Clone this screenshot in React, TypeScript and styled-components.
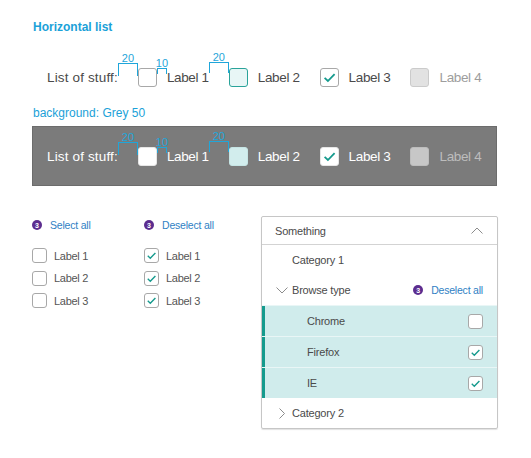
import React from 'react';
import styled, { createGlobalStyle } from 'styled-components';

const teal = '#159a8d';
const annot = '#1fa6da';
const link = '#2f7fc4';

const GlobalStyle = createGlobalStyle`
  html, body {
    margin: 0;
    background: #fff;
  }
  body {
    font-family: 'Liberation Sans', Arial, Helvetica, sans-serif;
    color: #4a4a4a;
  }
`;

const Page = styled.div`
  width: 531px;
  height: 458px;
  padding: 20px 34px 0 32px;
  box-sizing: border-box;
  overflow: hidden;
`;

const Heading = styled.h2`
  margin: 0 0 0 1px;
  font-size: 12px;
  line-height: 14px;
  font-weight: 700;
  color: #1ba1d8;
`;

const Caption = styled.div`
  margin: 18.5px 0 6.5px 1px;
  font-size: 12px;
  line-height: 14px;
  color: #1ba1d8;
`;

const DarkBar = styled.div`
  height: 60px;
  box-sizing: border-box;
  background: #7b7b7b;
  border: 1px solid #6c6c6c;
  display: flex;
  align-items: center;
  padding-left: 14px;
`;

const InlineList = styled.div<{ $dark?: boolean }>`
  display: flex;
  align-items: center;
  height: 19px;
  margin-top: ${p => (p.$dark ? 0 : 34)}px;
  padding-left: ${p => (p.$dark ? 0 : 15)}px;
  font-size: 13.5px;
  white-space: nowrap;
  color: ${p => (p.$dark ? '#fff' : '#4a4a4a')};
`;

const Lead = styled.span`
  letter-spacing: 0.15px;
`;

const ItemLabel = styled.span<{ $muted?: boolean; $dark?: boolean }>`
  letter-spacing: -0.35px;
  color: ${p => (p.$muted ? (p.$dark ? '#bdbdbd' : '#9d9d9d') : 'inherit')};
`;

const Gap = styled.span<{ $w: number }>`
  position: relative;
  flex: none;
  align-self: flex-start;
  width: ${p => p.$w}px;
  height: 19px;
`;

const Bracket = styled.span<{ $top: number; $h: number }>`
  position: absolute;
  left: 0;
  right: 0;
  top: ${p => p.$top}px;
  height: ${p => p.$h}px;
  box-sizing: border-box;
  border: 1px solid ${annot};
  border-bottom: 0;
`;

const Measure = styled.span`
  position: absolute;
  left: 50%;
  bottom: 100%;
  transform: translateX(-50%);
  font-size: 11px;
  line-height: 11px;
  letter-spacing: 0;
  color: ${annot};
`;

type BoxState = 'off' | 'active' | 'on' | 'disabled';

const boxColors = {
  light: {
    off: ['#fff', '#a8a8a8'],
    active: ['#e8f6f6', '#2aa39a'],
    on: ['#fff', '#a8a8a8'],
    disabled: ['#e2e2e2', '#cbcbcb'],
  },
  dark: {
    off: ['#fff', '#e6e6e6'],
    active: ['#d2eded', '#c6e5e5'],
    on: ['#fff', '#e6e6e6'],
    disabled: ['#c7c7c7', '#bdbdbd'],
  },
};

const Box = styled.span<{ $size: number; $state: BoxState; $dark?: boolean }>`
  flex: none;
  box-sizing: border-box;
  width: ${p => p.$size}px;
  height: ${p => p.$size}px;
  border-radius: 3px;
  display: inline-flex;
  align-items: center;
  justify-content: center;
  background: ${p => boxColors[p.$dark ? 'dark' : 'light'][p.$state][0]};
  border: 1px solid ${p => boxColors[p.$dark ? 'dark' : 'light'][p.$state][1]};
`;

const Check: React.FC<{ size: number }> = ({ size }) => (
  <svg width={size} height={size} viewBox="0 0 16 16">
    <polyline points="3.4,8.4 6.5,11.3 12.8,4.8" fill="none" stroke={teal} strokeWidth="1.7" />
  </svg>
);

const Checkbox: React.FC<{ size: number; state: BoxState; dark?: boolean }> = ({ size, state, dark }) => (
  <Box $size={size} $state={state} $dark={dark}>
    {state === 'on' && <Check size={size - 2} />}
  </Box>
);

const marks = [
  { w: 20, top: -5, h: 13, text: '20' },
  { w: 10, top: 0, h: 6, text: '10' },
  { w: 20, top: -6, h: 11, text: '20' },
];

const Spacer: React.FC<{ index: number; w: number }> = ({ index, w }) => {
  const m = marks[index];
  return (
    <Gap $w={w}>
      {m && (
        <Bracket $top={m.top} $h={m.h}>
          <Measure>{m.text}</Measure>
        </Bracket>
      )}
    </Gap>
  );
};

const rowStates: BoxState[] = ['off', 'active', 'on', 'disabled'];

const HorizontalList: React.FC<{ dark?: boolean }> = ({ dark }) => (
  <InlineList $dark={dark}>
    <Lead>List of stuff:</Lead>
    {rowStates.map((s, i) => (
      <React.Fragment key={i}>
        <Spacer index={i * 2} w={20} />
        <Checkbox size={19} state={s} dark={dark} />
        <Spacer index={i * 2 + 1} w={10} />
        <ItemLabel $muted={s === 'disabled'} $dark={dark}>
          Label {i + 1}
        </ItemLabel>
      </React.Fragment>
    ))}
  </InlineList>
);

const Lower = styled.div`
  display: flex;
  align-items: flex-start;
  margin-top: 30px;
`;

const Column = styled.div<{ $w: number }>`
  flex: none;
  width: ${p => p.$w}px;
  display: flex;
  flex-direction: column;
`;

const SelectHead = styled.div`
  display: flex;
  align-items: center;
  gap: 8px;
  height: 18px;
  margin-bottom: 14px;
`;

const Badge = styled.span`
  flex: none;
  width: 10px;
  height: 10px;
  border-radius: 50%;
  background: #5c2d8f;
  color: #fff;
  font-size: 7px;
  font-weight: 700;
  line-height: 1;
  display: inline-flex;
  align-items: center;
  justify-content: center;
`;

const LinkText = styled.span`
  font-size: 10.5px;
  letter-spacing: -0.2px;
  color: ${link};
`;

const CheckList = styled.div`
  display: flex;
  flex-direction: column;
  gap: 7.5px;
`;

const CheckRow = styled.div`
  display: flex;
  align-items: center;
  gap: 7px;
  height: 15px;
  font-size: 11px;
  letter-spacing: -0.3px;
  color: #555;
`;

const Panel = styled.div`
  flex: none;
  width: 237px;
  box-sizing: border-box;
  border: 1px solid #c6c6c6;
  border-radius: 2px;
  box-shadow: 0 1px 1px rgba(0, 0, 0, 0.12);
  font-size: 11px;
  letter-spacing: -0.2px;
  color: #4a4a4a;
  overflow: hidden;
`;

const PanelHeader = styled.div`
  height: 27px;
  border-bottom: 1px solid #d3d3d3;
  display: flex;
  align-items: center;
  justify-content: space-between;
  padding: 0 14px 0 13px;
`;

const TreeRow = styled.div<{ $indent: number; $gap?: number }>`
  height: 30px;
  display: flex;
  align-items: center;
  gap: ${p => p.$gap ?? 0}px;
  padding: 0 14px 0 ${p => p.$indent}px;
`;

const Spread = styled.span`
  margin-left: auto;
  display: flex;
  align-items: center;
  gap: 8px;
`;

const OptionRow = styled.div`
  height: 30px;
  border-top: 1px solid #e9f6f6;
  background: #d0ecec;
  box-shadow: inset 3px 0 0 ${teal};
  display: flex;
  align-items: center;
  justify-content: space-between;
  padding: 0 14px 0 45px;
`;

const Chevron: React.FC<{ dir: 'up' | 'down' | 'right' }> = ({ dir }) => {
  if (dir === 'right') {
    return (
      <svg width="6" height="11" viewBox="0 0 6 11">
        <polyline points="0.5,0.5 5.5,5.5 0.5,10.5" fill="none" stroke="#8c8c8c" strokeWidth="1" />
      </svg>
    );
  }
  const pts = dir === 'up' ? '0.5,6.5 6,1 11.5,6.5' : '0.5,0.5 6,6 11.5,0.5';
  return (
    <svg width="12" height="7" viewBox="0 0 12 7">
      <polyline points={pts} fill="none" stroke="#8c8c8c" strokeWidth="1" />
    </svg>
  );
};

const browsers = [
  { name: 'Chrome', on: false },
  { name: 'Firefox', on: true },
  { name: 'IE', on: true },
];

const App: React.FC = () => (
  <Page>
    <GlobalStyle />
    <Heading>Horizontal list</Heading>
    <HorizontalList />
    <Caption>background: Grey 50</Caption>
    <DarkBar>
      <HorizontalList dark />
    </DarkBar>

    <Lower>
      <Column $w={112}>
        <SelectHead>
          <Badge>3</Badge>
          <LinkText>Select all</LinkText>
        </SelectHead>
        <CheckList>
          {[1, 2, 3].map(n => (
            <CheckRow key={n}>
              <Checkbox size={15} state="off" />
              <span>Label {n}</span>
            </CheckRow>
          ))}
        </CheckList>
      </Column>
      <Column $w={117}>
        <SelectHead>
          <Badge>3</Badge>
          <LinkText>Deselect all</LinkText>
        </SelectHead>
        <CheckList>
          {[1, 2, 3].map(n => (
            <CheckRow key={n}>
              <Checkbox size={15} state="on" />
              <span>Label {n}</span>
            </CheckRow>
          ))}
        </CheckList>
      </Column>

      <Panel>
        <PanelHeader>
          <span>Something</span>
          <Chevron dir="up" />
        </PanelHeader>
        <TreeRow $indent={30}>Category 1</TreeRow>
        <TreeRow $indent={14} $gap={4}>
          <Chevron dir="down" />
          <span>Browse type</span>
          <Spread>
            <Badge>3</Badge>
            <LinkText>Deselect all</LinkText>
          </Spread>
        </TreeRow>
        {browsers.map(b => (
          <OptionRow key={b.name}>
            <span>{b.name}</span>
            <Checkbox size={15} state={b.on ? 'on' : 'off'} />
          </OptionRow>
        ))}
        <TreeRow $indent={17} $gap={7}>
          <Chevron dir="right" />
          <span>Category 2</span>
        </TreeRow>
      </Panel>
    </Lower>
  </Page>
);

export default App;
